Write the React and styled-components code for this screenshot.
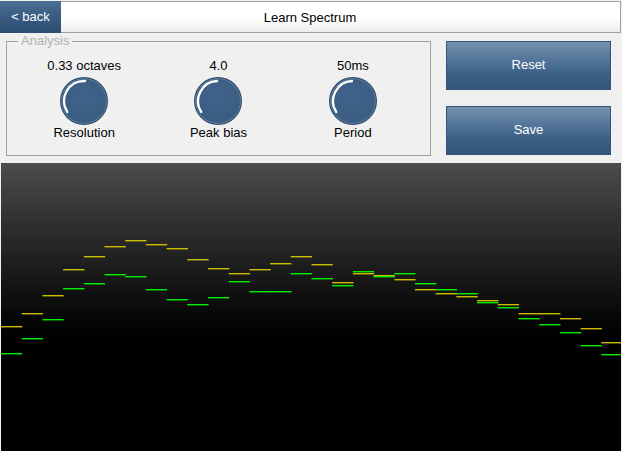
import React from "react";
import styled, { createGlobalStyle } from "styled-components";

const GlobalStyle = createGlobalStyle`
	html, body {
		margin: 0;
		padding: 0;
		background: #f0f0f0;
	}
	body {
		font-family: "Liberation Sans", Arial, sans-serif;
	}
`;

const Screen = styled.div`
	width: 622px;
	height: 451px;
	display: flex;
	flex-direction: column;
	background: #f0f0f0;
	overflow: hidden;
`;

const Header = styled.div`
	display: flex;
	height: 32px;
	margin-top: 1px;
	margin-right: 1px;
`;

const BackButton = styled.button`
	width: 61px;
	height: 100%;
	border: none;
	padding: 0 0 1px;
	background: linear-gradient(#4a6e94, #36587d 60%, #2d4e72);
	color: #fff;
	font: 13px "Liberation Sans", Arial, sans-serif;
`;

const TitleBar = styled.div`
	flex: 1;
	display: flex;
	align-items: center;
	justify-content: center;
	border: 1px solid #a0a0a0;
	border-left: none;
	background: linear-gradient(#ffffff 55%, #ececec);
	color: #000;
	font-size: 13px;
	padding-left: 0;
	margin-left: 0;
	& > span {
		margin-left: -61px;
	}
`;

const Controls = styled.div`
	display: flex;
	gap: 15px;
	height: 130px;
	padding: 8px 11px 8px 6px;
	box-sizing: border-box;
`;

const Group = styled.div`
	position: relative;
	width: 425px;
	height: 115px;
	box-sizing: border-box;
	border: 1px solid #a0a0a0;
	display: flex;
	padding: 0 10px;
`;

const Legend = styled.span`
	position: absolute;
	top: -9px;
	left: 11px;
	padding: 0 3px;
	background: #f0f0f0;
	color: #b0b0b0;
	font-size: 13px;
	line-height: 16px;
`;

const KnobColumn = styled.div`
	width: 135px;
	display: flex;
	flex-direction: column;
	align-items: center;
	padding-top: 17px;
`;

const KnobLabel = styled.div`
	font-size: 13px;
	line-height: 14px;
	color: #000;
	white-space: nowrap;
	margin: ${(p) => (p.$top ? "0 0 3px" : "0")};
`;

const ButtonColumn = styled.div`
	display: flex;
	flex-direction: column;
	gap: 16px;
	width: 166px;
`;

const ActionButton = styled.button`
	height: 49px;
	width: 100%;
	border: 1px solid #33557a;
	background: linear-gradient(#7591ae, #4d7096 45%, #3b5e83 70%, #34557a);
	color: #fff;
	font: 13px "Liberation Sans", Arial, sans-serif;
	padding: 0 0 2px;
`;

const Spectrum = styled.div`
	flex: 1;
	margin: 0 1px 0 1px;
	background: linear-gradient(#4c4c4c 0%, #2e2e2e 22%, #151515 42%, #050505 55%, #000 62%);
	& > svg {
		display: block;
	}
`;

const yellow = [
	326, 313, 295, 269, 256, 246, 240, 244, 248, 259, 268, 273, 269, 263, 256,
	264, 282, 273, 275, 279, 289, 293, 296, 300, 304, 313, 313, 318, 328, 342,
];

const green = [
	353, 338, 319, 288, 283, 274, 276, 289, 299, 304, 297, 281, 291, 291, 273,
	278, 285, 271, 276, 273, 283, 289, 293, 302, 307, 318, 324, 332, 345, 354,
];

function Knob({ end }) {
	const cx = 25;
	const cy = 25;
	const r = 20;
	const pt = (deg) => {
		const a = ((deg - 90) * Math.PI) / 180;
		return [cx + r * Math.cos(a), cy + r * Math.sin(a)];
	};
	const [sx, sy] = pt(237);
	const [ex, ey] = pt(360 + end);
	return (
		<svg width="50" height="50" viewBox="0 0 50 50">
			<defs>
				<radialGradient id="kb" cx="50%" cy="40%" r="60%">
					<stop offset="0%" stopColor="#41648b" />
					<stop offset="100%" stopColor="#3a5c81" />
				</radialGradient>
			</defs>
			<circle cx={cx} cy={cy} r="24" fill="#2b4663" />
			<circle cx={cx} cy={cy} r="23" fill="#5c7c9e" />
			<circle cx={cx} cy={cy} r="22" fill="url(#kb)" />
			<path
				d={`M ${sx} ${sy} A ${r} ${r} 0 0 1 ${ex} ${ey}`}
				fill="none"
				stroke="#ffffff"
				strokeWidth="2.4"
				strokeLinecap="round"
			/>
		</svg>
	);
}

function SpectrumChart() {
	const w = 20.7;
	const seg = (vals, color) =>
		vals.map((v, i) => (
			<rect
				key={color + i}
				x={i * w}
				y={v - 163}
				width={w + 0.6}
				height="1.4"
				fill={color}
			/>
		));
	return (
		<svg width="620" height="288" viewBox="0 0 620 288">
			{seg(yellow, "#cabd00")}
			{seg(green, "#00f000")}
		</svg>
	);
}

const knobs = [
	{ value: "0.33 octaves", name: "Resolution", end: 3 },
	{ value: "4.0", name: "Peak bias", end: -3 },
	{ value: "50ms", name: "Period", end: -3 },
];

export default function App() {
	return (
		<Screen>
			<GlobalStyle />
			<Header>
				<BackButton>&lt; back</BackButton>
				<TitleBar>
					<span>Learn Spectrum</span>
				</TitleBar>
			</Header>
			<Controls>
				<Group>
					<Legend>Analysis</Legend>
					{knobs.map((k) => (
						<KnobColumn key={k.name}>
							<KnobLabel $top>{k.value}</KnobLabel>
							<Knob end={k.end} />
							<KnobLabel>{k.name}</KnobLabel>
						</KnobColumn>
					))}
				</Group>
				<ButtonColumn>
					<ActionButton>Reset</ActionButton>
					<ActionButton>Save</ActionButton>
				</ButtonColumn>
			</Controls>
			<Spectrum>
				<SpectrumChart />
			</Spectrum>
		</Screen>
	);
}
